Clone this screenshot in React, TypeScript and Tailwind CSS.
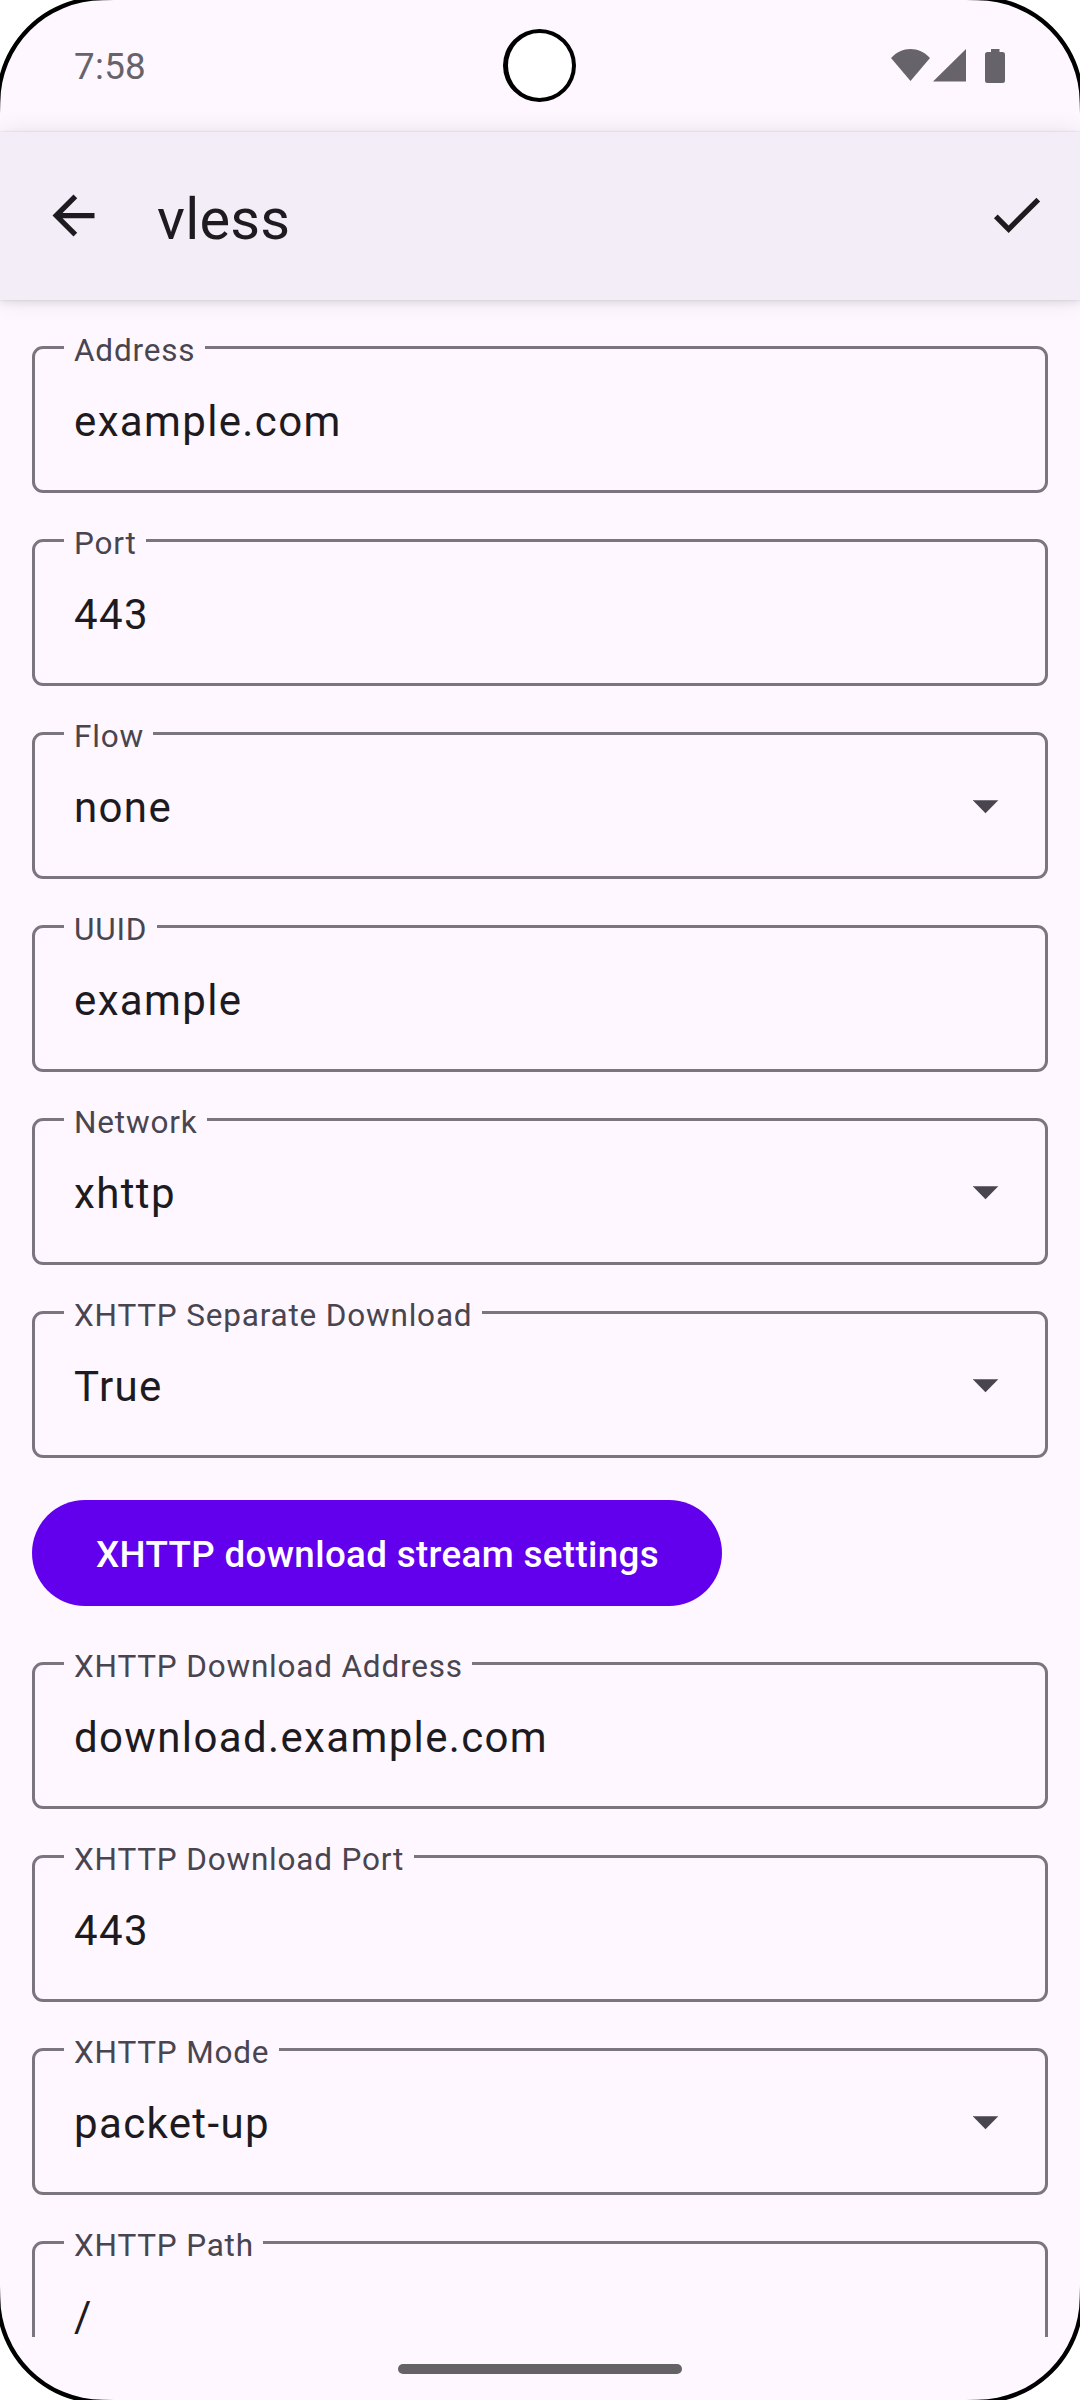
const fields1 = [
  { label: 'Address', value: 'example.com' },
  { label: 'Port', value: '443' },
  { label: 'Flow', value: 'none', select: true },
  { label: 'UUID', value: 'example' },
  { label: 'Network', value: 'xhttp', select: true },
  { label: 'XHTTP Separate Download', value: 'True', select: true },
];

const fields2 = [
  { label: 'XHTTP Download Address', value: 'download.example.com' },
  { label: 'XHTTP Download Port', value: '443' },
  { label: 'XHTTP Mode', value: 'packet-up', select: true },
  { label: 'XHTTP Path', value: '/' },
];

type FieldProps = { label: string; value: string; select?: boolean };

function Field({ label, value, select }: FieldProps) {
  return (
    <fieldset className="h-[147px] w-full shrink-0 rounded-[11px] border-[3px] border-[#7b757f]">
      <legend className="ml-[29px] h-[3px] pr-[9.5px] pl-[10px] text-[31.5px] leading-[3px] tracking-[0.81px] whitespace-nowrap text-[#49454f]">
        <span className="relative top-[3px]">{label}</span>
      </legend>
      <div className="flex h-[141px] items-center justify-between pt-[5px] pr-[46px] pl-[39px]">
        <span className="text-[42px] leading-[50px] tracking-[1.36px] text-[#1d1b20]">{value}</span>
        {select && (
          <svg className="mb-[2px] h-[14px] w-[26px]" viewBox="0 0 26 14" fill="#49454f">
            <path d="M-0.3 0.3H25.3L12.5 13.300Z" />
          </svg>
        )}
      </div>
    </fieldset>
  );
}

function StatusBar() {
  return (
    <div className="flex h-[132px] shrink-0 items-center justify-between pr-[75px] pl-[74px]">
      <span className="pt-[2px] text-[36.75px] leading-[44px] tracking-[0.3px] text-[#67636a]">7:58</span>
      <div className="flex items-start">
        <svg className="h-[34px] w-[114px]" viewBox="0 0 114 34" fill="#67636a">
          <path d="M0 9C11 -3 28 -3 39 9L19.5 32Z" />
          <path d="M42 32.500L75 0V32.500Z" />
          <path d="M100 0h8.500v3h3q2.500 0 2.500 2.500v26q0 2.500 -2.500 2.500h-15q-2.500 0 -2.500 -2.500v-26q0 -2.500 2.500 -2.500h3.500Z" />
        </svg>
      </div>
    </div>
  );
}

function AppBar() {
  return (
    <header className="relative flex h-[168px] shrink-0 items-center bg-[#f3edf7] pr-[32px] pl-[42px] shadow-[0_0_2px_rgba(0,0,0,0.12),0_3px_8px_rgba(0,0,0,0.08),0_0_24px_rgba(0,0,0,0.09)]">
      <svg className="mb-[2px] h-[63px] w-[63px]" viewBox="0 0 24 24" fill="#1d1b20">
        <path d="M20 11H7.830l5.590-5.590L12 4l-8 8 8 8 1.410-1.410L7.830 13H20v-2z" />
      </svg>
      <h1 className="ml-[52px] pt-[5px] text-[57.75px] leading-[68px] tracking-[0.2px] text-[#1d1b20]">vless</h1>
      <svg className="mb-[3px] ml-auto h-[63px] w-[63px]" viewBox="0 0 24 24" fill="#1d1b20">
        <path d="M9 16.170L4.830 12l-1.420 1.410L9 19 21 7l-1.410-1.410z" />
      </svg>
    </header>
  );
}

function Corner({ className }: { className: string }) {
  return (
    <svg className={className} viewBox="0 0 120 120">
      <path d="M0 0H114L102.500 0.300A102.500 102.500 0 0 0 0.300 102.500L0 114Z" fill="#000" />
      <path d="M0 0H74A106 106 0 0 0 0 74Z" fill="#fff" />
    </svg>
  );
}

export default function App() {
  return (
    <div className="relative flex h-[2400px] w-[1080px] flex-col overflow-hidden bg-[#fef7ff] font-['Roboto',sans-serif]">
      <StatusBar />
      <AppBar />
      <main className="flex min-h-0 flex-1 flex-col gap-[46px] overflow-hidden px-[32px] pt-[46px]">
        {fields1.map((f) => (
          <Field key={f.label} {...f} />
        ))}
        <button className="-mt-[4px] mb-[10px] h-[106px] w-[690px] shrink-0 rounded-full bg-[#6200ee] pt-[3px] pl-px text-[36.75px] font-medium tracking-[0.34px] whitespace-nowrap text-white">
          XHTTP download stream settings
        </button>
        {fields2.map((f) => (
          <Field key={f.label} {...f} />
        ))}
      </main>
      <footer className="flex h-[63px] shrink-0 items-center justify-center pt-px">
        <div className="h-[10px] w-[284px] rounded-full bg-[#656266]" />
      </footer>

      <div className="absolute top-[29px] left-[503px] h-[73px] w-[73px] rounded-full border-[4px] border-l-[5px] border-black bg-white" />
      <Corner className="absolute top-0 left-0 h-[120px] w-[120px]" />
      <Corner className="absolute top-0 right-0 h-[120px] w-[120px] -scale-x-100" />
      <Corner className="absolute bottom-0 left-0 h-[120px] w-[120px] -scale-y-100" />
      <Corner className="absolute right-0 bottom-0 h-[120px] w-[120px] -scale-100" />
    </div>
  );
}
